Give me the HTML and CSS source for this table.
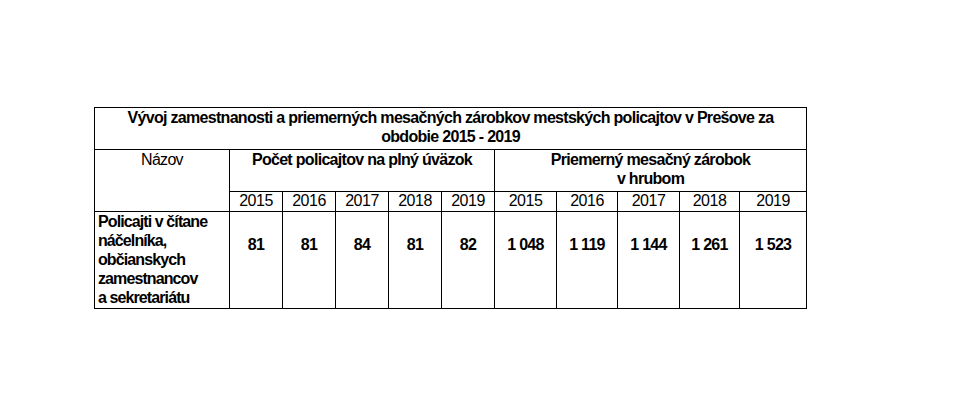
FILE: index.html
```html
<!DOCTYPE html>
<html lang="sk">
<head>
<meta charset="utf-8">
<title>Vývoj zamestnanosti</title>
<link rel="stylesheet" href="styles.css">
</head>
<body>
<table class="stats">
  <colgroup>
    <col class="c-name">
    <col class="c-y"><col class="c-y"><col class="c-y"><col class="c-y"><col class="c-y">
    <col class="c-a"><col class="c-b"><col class="c-a"><col class="c-c"><col class="c-d">
  </colgroup>
  <tr class="r-title">
    <th colspan="11" class="title">Vývoj zamestnanosti a priemerných mesačných zárobkov mestských policajtov v Prešove za<br>obdobie 2015 - 2019</th>
  </tr>
  <tr class="r-head">
    <td rowspan="2" class="name">Názov</td>
    <th colspan="5" class="group">Počet policajtov na plný úväzok</th>
    <th colspan="5" class="group">Priemerný mesačný zárobok<br>v hrubom</th>
  </tr>
  <tr class="r-years">
    <td>2015</td><td>2016</td><td>2017</td><td>2018</td><td>2019</td>
    <td>2015</td><td>2016</td><td>2017</td><td>2018</td><td>2019</td>
  </tr>
  <tr class="r-data">
    <th class="label">Policajti v čítane náčelníka, občianskych zamestnancov a&nbsp;sekretariátu</th>
    <td>81</td><td>81</td><td>84</td><td>81</td><td>82</td>
    <td>1 048</td><td>1 119</td><td>1 144</td><td>1 261</td><td>1 523</td>
  </tr>
</table>
</body>
</html>
```
FILE: styles.css
```css
html, body {
  margin: 0;
  background: #fff;
}
body {
  padding: 107px 0 0 94px;
  font-family: "Liberation Sans", Arial, sans-serif;
  font-size: 16px;
  color: #000;
}
.stats {
  border-collapse: collapse;
  table-layout: fixed;
  width: 712px;
}
.c-name { width: 135px; }
.c-y { width: 53px; }
.c-a { width: 62px; }
.c-b { width: 61px; }
.c-c { width: 60px; }
.c-d { width: 67px; }
.stats th, .stats td {
  border: 1px solid #000;
  padding: 0;
  text-align: center;
  vertical-align: top;
  line-height: 19px;
  letter-spacing: -0.7px;
}
.stats th { font-weight: bold; }
.r-title { height: 42px; }
.r-head { height: 42px; }
.r-years { height: 20px; }
.r-data { height: 97px; }
.title { padding-top: 2px; }
.group { padding-top: 2px; }
.name { padding-top: 2px; font-weight: normal; }
.r-years td { line-height: 18px; letter-spacing: -0.5px; }
.r-data td { font-weight: bold; padding-top: 23px; }
.stats .label {
  text-align: left;
  padding: 0 0 0 3px;
  line-height: 19px;
  letter-spacing: -0.9px;
}
```
